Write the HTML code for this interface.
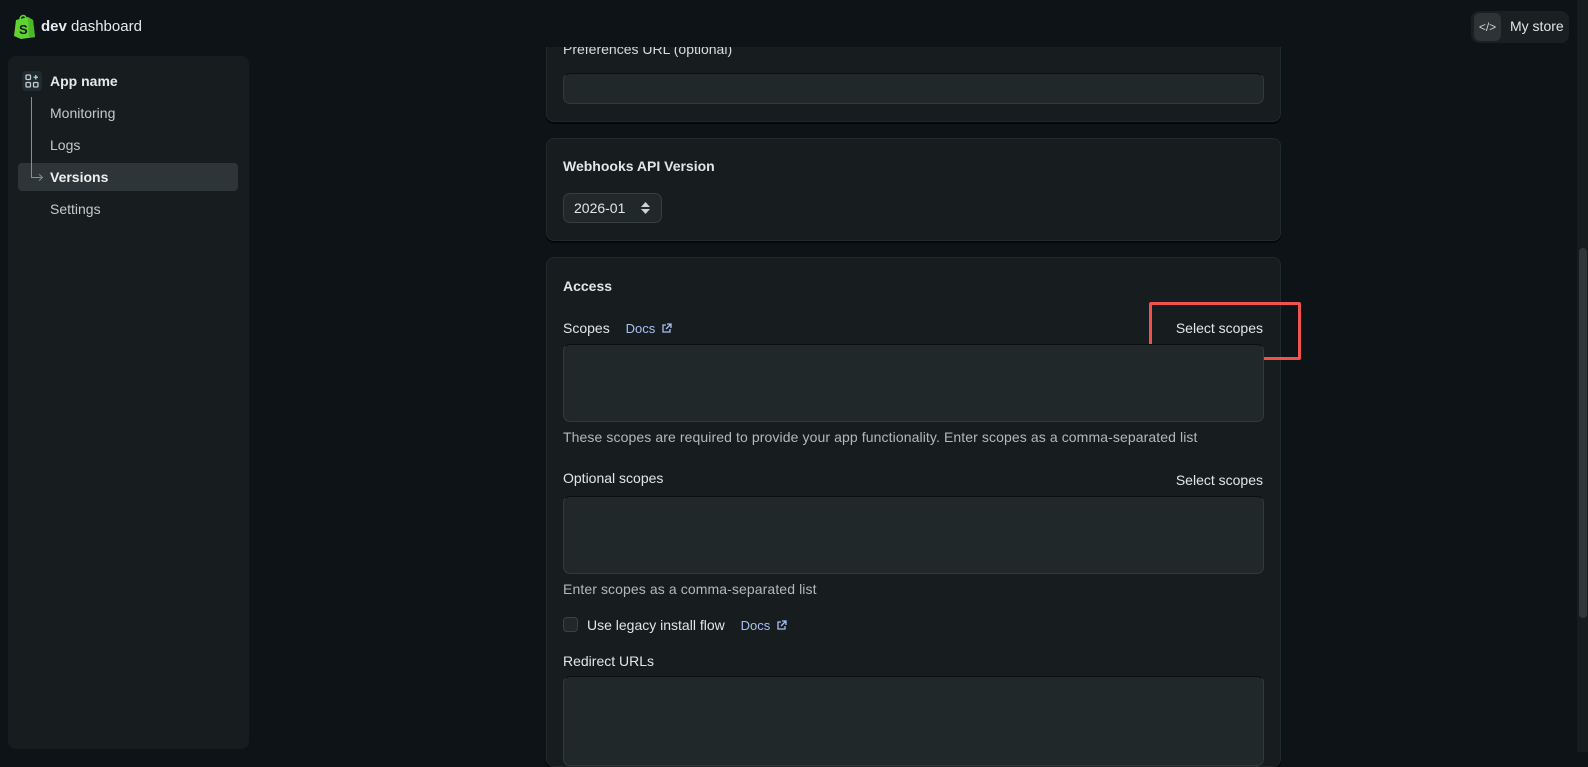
<!DOCTYPE html>
<html><head><meta charset="utf-8"><style>
*{box-sizing:border-box;margin:0;padding:0}
body{width:1588px;height:752px;overflow:hidden;background:#0d1316;font-family:"Liberation Sans",sans-serif;color:#e3e5e6;position:relative;font-size:14px}
.abs{position:absolute}
.side{left:8px;top:56px;width:241px;height:693px;background:#171c1f;border-radius:8px}
.nav{position:absolute;left:50px;font-size:14px;color:#c6c9cb;line-height:20px}
.card{position:absolute;left:546px;width:735px;background:#171d1f;border:1px solid #1f2a2b;border-radius:8px;box-shadow:0 2px 0 #05080a}
.inp{position:absolute;left:563px;width:701px;background:#212829;border:1px solid #323a3c;border-top-color:#0b0f10;border-radius:7px}
.lbl{position:absolute;font-size:14px;color:#e3e5e6;line-height:18px}
.help{position:absolute;font-size:14px;color:#b3b8ba;line-height:18px;letter-spacing:.1px}
.docs{color:#a9c0f5;font-size:13px}
.ext{display:inline-block;vertical-align:-1px;margin-left:6px}
</style></head><body>
<!-- sidebar -->
<div class="abs side"></div>
<div class="abs" style="left:22px;top:71px;width:20px;height:20px;background:#1e2b30;border-radius:4px"></div>
<svg class="abs" style="left:25px;top:74px" width="14" height="14" viewBox="0 0 14 14" fill="none" stroke="#c8ccce" stroke-width="1.3"><rect x="1" y="1" width="4.5" height="4.5" rx="1"/><rect x="1" y="8.5" width="4.5" height="4.5" rx="1"/><rect x="8.5" y="8.5" width="4.5" height="4.5" rx="1"/><path d="M10.75 1v4.5M8.5 3.25h4.5"/></svg>
<div class="nav" style="top:71px;font-weight:bold;color:#e6e8e9">App name</div>
<div class="abs" style="left:18px;top:163px;width:220px;height:28px;background:#2e3538;border-radius:4px"></div>
<div class="abs" style="left:31px;top:97px;width:1px;height:80px;background:#8a9092"></div>
<div class="abs" style="left:31px;top:177px;width:10px;height:1px;background:#8a9092"></div>
<div class="abs" style="left:37px;top:174.5px;width:5px;height:5px;border-top:1px solid #8a9092;border-right:1px solid #8a9092;transform:rotate(45deg)"></div>
<div class="nav" style="top:103px">Monitoring</div>
<div class="nav" style="top:135px">Logs</div>
<div class="nav" style="top:167px;font-weight:bold;color:#eef0f0">Versions</div>
<div class="nav" style="top:199px">Settings</div>
<!-- card 1 -->
<div class="card" style="top:20px;height:102px"></div>
<div class="lbl" style="left:563px;top:40px;color:#d8dbdc">Preferences URL (optional)</div>
<div class="inp" style="top:73px;height:31px"></div>
<!-- header -->
<div class="abs" style="left:0;top:0;width:1577px;height:47px;background:#0d1316"></div>
<div class="abs" style="left:1471px;top:11px;width:98px;height:32px;background:#1a2022;border-radius:8px"></div>
<div class="abs" style="left:1474px;top:13px;width:27px;height:28px;background:#2c3436;border-radius:6px;color:#d0d3d4;font-size:12px;text-align:center;line-height:28px">&lt;/&gt;</div>
<div class="abs" style="left:1510px;top:18px;font-size:14px;color:#e3e5e6">My store</div>
<svg class="abs" style="left:13px;top:14px" width="23" height="25" viewBox="0 0 23 25"><path d="M3 6 L15 3 L20 6 L22 23 L8 25 L1 22 Z" fill="#5fd32f"/><path d="M15 3 L20 6 L22 23 L16 24 Z" fill="#4cb827"/><path d="M7 6 C7 1 12 0 13 4" fill="none" stroke="#5fd32f" stroke-width="1.6"/><text x="6" y="20" font-family="Liberation Sans" font-weight="bold" font-size="13" fill="#0d1316">S</text></svg>
<div class="abs" style="left:41px;top:18px;font-size:15px;color:#e8eaeb"><b>dev</b> dashboard</div>
<!-- card 2 -->
<div class="card" style="top:138px;height:103px"></div>
<div class="lbl" style="left:563px;top:157px;font-weight:bold">Webhooks API Version</div>
<div class="abs" style="left:563px;top:193px;width:99px;height:30px;background:#212829;border:1px solid #363e40;border-radius:7px"></div>
<div class="lbl" style="left:574px;top:199px">2026-01</div>
<svg class="abs" style="left:641px;top:202px" width="9" height="12" viewBox="0 0 9 12" fill="#cfd2d3"><path d="M4.5 0L9 5H0z"/><path d="M4.5 12L9 7H0z"/></svg>
<!-- card 3 -->
<div class="card" style="top:257px;height:510px"></div>
<div class="lbl" style="left:563px;top:277px;font-weight:bold">Access</div>
<div class="lbl" style="left:563px;top:319px">Scopes <span class="docs" style="margin-left:12px">Docs<svg class="ext" width="11" height="11" viewBox="0 0 11 11" fill="none" stroke="#a9c0f5" stroke-width="1.3"><path d="M5 2H2v7h7V6M6 1h4v4M10 1L5 6"/></svg></span></div>
<div class="lbl" style="left:1150px;top:319px;width:113px;text-align:right">Select scopes</div>
<div class="abs" style="left:1149px;top:302px;width:152px;height:58px;border:3px solid #ef5350;border-radius:2px"></div>
<div class="inp" style="top:344px;height:78px"></div>
<div class="help" style="left:563px;top:428px">These scopes are required to provide your app functionality. Enter scopes as a comma-separated list</div>
<div class="lbl" style="left:563px;top:469px">Optional scopes</div>
<div class="lbl" style="left:1150px;top:471px;width:113px;text-align:right">Select scopes</div>
<div class="inp" style="top:496px;height:78px"></div>
<div class="help" style="left:563px;top:580px">Enter scopes as a comma-separated list</div>
<div class="abs" style="left:563px;top:617px;width:15px;height:15px;background:#212829;border:1px solid #3a4244;border-radius:4px"></div>
<div class="lbl" style="left:587px;top:616px">Use legacy install flow <span class="docs" style="margin-left:12px">Docs<svg class="ext" width="11" height="11" viewBox="0 0 11 11" fill="none" stroke="#a9c0f5" stroke-width="1.3"><path d="M5 2H2v7h7V6M6 1h4v4M10 1L5 6"/></svg></span></div>
<div class="lbl" style="left:563px;top:652px">Redirect URLs</div>
<div class="inp" style="top:676px;height:90px"></div>
<!-- scrollbar -->
<div class="abs" style="left:1577px;top:0;width:11px;height:752px;background:#171d1f"></div>
<div class="abs" style="left:1579px;top:248px;width:8px;height:370px;background:#2f3739;border-radius:4px"></div>
</body></html>
